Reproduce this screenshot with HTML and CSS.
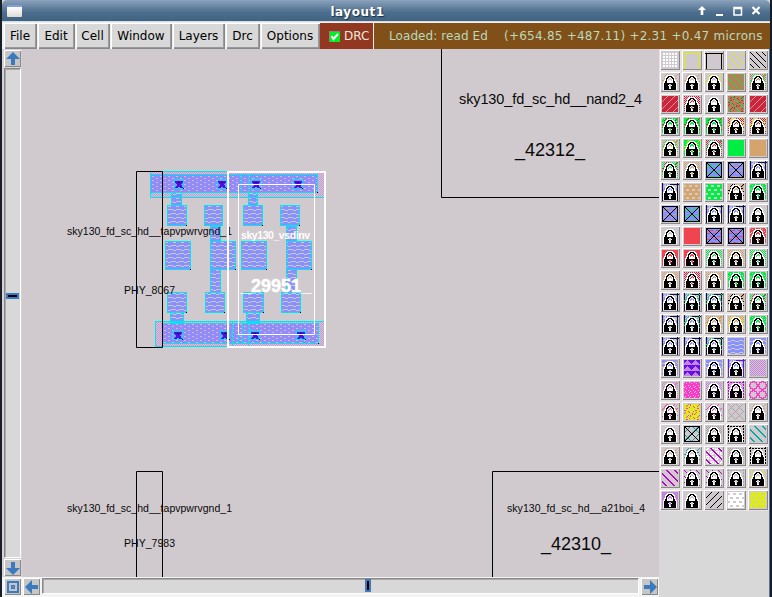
FILE: index.html
```html
<!DOCTYPE html>
<html lang="en">
<head>
<meta charset="utf-8">
<title>layout1</title>
<link rel="stylesheet" href="styles.css">
</head>
<body>
<div class="window">
  <header class="titlebar">
    <span class="window-icon"></span>
    <span class="title">layout1</span>
    <svg class="controls" width="66" height="14" viewBox="0 0 66 14">
      <path d="M6 2l4 4H7.3v5H4.7V6H2z" fill="#fff"/>
      <path d="M20 10h7v2h-7z" fill="#fff"/>
      <path d="M38 3.500h7.500v7.500H38zM38 4.500h7" fill="none" stroke="#fff" stroke-width="1.500"/>
      <path d="M56.500 3l7 7M63.500 3l-7 7" stroke="#fff" stroke-width="2.200"/>
    </svg>
  </header>
  <nav class="menubar">
    <button class="menu file">File</button>
    <button class="menu edit">Edit</button>
    <button class="menu cell">Cell</button>
    <button class="menu win">Window</button>
    <button class="menu layers">Layers</button>
    <button class="menu drcmenu">Drc</button>
    <button class="menu options">Options</button>
    <span class="drc"><svg width="11" height="11" viewBox="0 0 11 11"><path d="M0 0h11v11H0z" fill="#00f028"/><path d="M.5 11V.5H11" fill="none" stroke="#8a8580"/><path d="M2.500 5l2 3L9 3" fill="none" stroke="#fff" stroke-width="2"/></svg>DRC</span>
    <span class="status"><span class="loaded">Loaded: read Ed</span><span class="coords">(+654.85 +487.11) +2.31 +0.47 microns</span></span>
  </nav>
  <main class="workspace">
    <div class="vscroll">
      <span class="arrow"><svg width="14" height="14" viewBox="0 0 14 14"><path d="M7 0l7 7H9v6H5V7H0z"/></svg></span>
      <span class="vtrack"><i class="vthumb"></i></span>
      <span class="arrow"><svg width="14" height="14" viewBox="0 0 14 14"><path d="M7 14l7-7H9V1H5v6H0z"/></svg></span>
    </div>
    <svg class="layout" width="637" height="528" viewBox="22 49 637 528">
      <defs>
        <pattern id="metal" width="8" height="8" patternUnits="userSpaceOnUse">
          <path d="M0 0h8v8H0z" fill="#8790ff"/>
          <path d="M0 1h5v1H0zM5 2h3v1H5zM3 5h5v1H3zM0 6h3v1H0z" fill="#cfc8d4"/>
        </pattern>
        <pattern id="rail" width="8" height="4" patternUnits="userSpaceOnUse">
          <path d="M0 0h8v4H0z" fill="#8d8cfb"/>
          <path d="M0 0h2v1H0zM4 2h2v1H4z" fill="#d4bccf"/>
          <path d="M5 0h1v1H5zM1 2h1v1H1zM3 1h1v1H3zM7 3h1v1H7z" fill="#b584ea"/>
        </pattern>
        <pattern id="well" width="2" height="2" patternUnits="userSpaceOnUse">
          <path d="M0 0h2v2H0z" fill="#d0cace"/>
          <path d="M0 0h1v1H0zM1 1h1v1H1z" fill="#c994da"/>
        </pattern>
        <g id="via">
          <path d="M.5.5h9v9h-9z" fill="#9588f8" stroke="#00e5f0"/>
          <path d="M1 2h8v2H8v1H7v1h1v2h1v1H6V8H4v1H1V8h1V7h1V5H2V4H1z" fill="#4a10e8"/>
          <path d="M4 3h2v1H4zM9 9h1v1H9z" fill="#151020"/>
        </g>
      </defs>
      <g class="frames">
        <path d="M441.500 49v148.500H659M659 471.500H492.500V577M136.500 577V471.500h26V577"/>
      </g>
      <g shape-rendering="crispEdges">
        <path d="M150 172h174v25H150zM155 321h169v26H155z" fill="url(#well)"/>
        <path d="M150 174h168v18H150zM162 324h157v19H162z" fill="url(#rail)"/>
        <g class="metal">
          <path d="M171.500 192.500h10v13h-10zM248.500 192.500h9v13h-9zM210.500 226.500h10v15h-10zM286.500 226.500h10v15h-10zM210.500 269.500h10v23h-10zM286.500 269.500h10v23h-10zM170.500 312.500h13v10h-13zM246.500 312.500h13v10h-13z"/>
          <path d="M167.500 205.500h19v20h-19zM204.500 205.500h18v20h-18zM243.500 205.500h19v20h-19zM280.500 205.500h19v20h-19zM165.500 241.500h25v28h-25zM210.500 241.500h25v28h-25zM241.500 241.500h25v28h-25zM286.500 241.500h25v28h-25zM167.500 292.500h19v20h-19zM205.500 292.500h19v20h-19zM243.500 292.500h20v20h-20zM281.500 292.500h19v20h-19z"/>
        </g>
        <path class="edges" d="M228 171.500h-77.500v25.500H228M150 174.500h167.500v18H150M228 197h96M241.500 174v18M248.500 174v23M228 346.500h-72.500v-25H324M162 323.500h156.500v19.500H162M232.500 322v25M238.500 322v21M242.500 322v21M248.500 322v24"/>
        <use href="#via" x="174" y="179"/><use href="#via" x="217" y="179"/><use href="#via" x="251" y="179"/><use href="#via" x="293" y="179"/>
        <use href="#via" x="173" y="330"/><use href="#via" x="220" y="330"/><use href="#via" x="250" y="330"/><use href="#via" x="296" y="330"/>
        <path d="M186 225h1v1h-1zM190 269h1v1h-1zM235 269h1v1h-1zM262 225h1v1h-1zM299 225h1v1h-1zM266 269h1v1h-1zM311 269h1v1h-1zM186 312h1v1h-1zM224 312h1v1h-1zM263 312h1v1h-1zM300 312h1v1h-1zM317 192h1v1h-1zM318 343h1v1h-1z" fill="#000"/>
      </g>
      <path class="frames" d="M136.500 171.500h26v176h-26z"/>
      <g class="labels">
        <text x="67" y="235" textLength="165">sky130_fd_sc_hd__tapvpwrvgnd_1</text>
        <text x="124" y="294" textLength="51">PHY_8067</text>
        <text x="67" y="512" textLength="165">sky130_fd_sc_hd__tapvpwrvgnd_1</text>
        <text x="124" y="547" textLength="51">PHY_7983</text>
        <text x="507" y="512" textLength="138">sky130_fd_sc_hd__a21boi_4</text>
        <text class="mid" x="459" y="104" textLength="183">sky130_fd_sc_hd__nand2_4</text>
        <text class="big" x="515" y="156" textLength="70">_42312_</text>
        <text class="big" x="541" y="550" textLength="70">_42310_</text>
      </g>
      <path d="M228 172h97v175h-97z" fill="none" stroke="#fff" stroke-width="2"/>
      <path d="M238.500 184.500h76v150h-76z" fill="none" stroke="#fff"/>
      <g class="labels selected">
        <text x="241" y="239" textLength="69">sky130_vsdinv</text>
        <text class="big name" x="241" y="292" textLength="70">_29951_</text>
      </g>
    </svg>
    <aside class="palette" id="palette"></aside>
    <div class="hscroll">
      <span class="arrow"><svg width="14" height="14" viewBox="0 0 14 14"><path fill-rule="evenodd" d="M1 1h12v12H1zM3 3v8h8V3zM5 5h4v4H5zM6.500 6.500v1h1v-1z"/></svg></span>
      <span class="arrow"><svg width="14" height="14" viewBox="0 0 14 14"><path d="M0 7l7-7v5h6v4H7v5z"/></svg></span>
      <span class="htrack"><i class="hthumb"></i></span>
      <span class="arrow"><svg width="14" height="14" viewBox="0 0 14 14"><path d="M14 7L7 0v5H1v4h6v5z"/></svg></span>
    </div>
  </main>
</div>
<script src="palette.js"></script>
</body>
</html>
```

FILE: styles.css
```css
* { box-sizing: border-box; }
body { margin: 0; background: #111820; overflow: hidden; }
.window {
  width: 772px; height: 597px; display: flex; flex-direction: column;
  border-left: 2px solid #172029; border-right: 2px solid #141c26;
  background: #d8d8d8; font-family: "DejaVu Sans", sans-serif;
}
.titlebar {
  height: 22px; flex: none; display: grid; grid-template-columns: 80px 1fr 137px; align-items: center;
  background: linear-gradient(#8ba3bb, #7590ac 20%, #4c6d8d 60%, #426582 95%);
  border-bottom: 1px solid #d5dbe2; border-radius: 5px 5px 0 0;
}
.window-icon { width: 15px; height: 12px; margin-left: 5px; background: linear-gradient(#fff, #dedbd4); border-top: 2px solid #7f9fe0; border-radius: 1px; }
.title { color: #fff; font-size: 12px; font-weight: bold; text-align: center; letter-spacing: .5px; padding-top: 2px; text-shadow: 1px 1px 1px #1c3044; }
.controls { justify-self: end; margin-right: 8px; }
.menubar { height: 27px; flex: none; display: flex; padding: 1px 0 0 2px; gap: 1px; background: #efefef; }
.menu {
  height: 26px; margin: 0; padding: 0 1px 0 0; border: 0; background: #d8d8d8; color: #000;
  font: 12px/24px "DejaVu Sans", sans-serif; white-space: nowrap;
  box-shadow: inset 1px 1px #fff, inset -1px -1px #888, inset -2px -2px #999;
}
.file { width: 33px; }
.edit { width: 37px; }
.cell { width: 34px; }
.win { width: 61px; }
.layers { width: 52px; }
.drcmenu { width: 34px; }
.options { width: 59px; }
.drc { width: 53px; display: flex; align-items: center; gap: 4px; padding-left: 9px; background: #923820; color: #eee8de; font-size: 12px; margin-left: -1px; }
.status { flex: 1; display: flex; align-items: center; background: #805018; color: #b9d8be; font-size: 12px; white-space: pre; }
.loaded { width: 115px; margin-left: 15px; letter-spacing: .08px; }
.coords { letter-spacing: .24px; }
.workspace { flex: 1; min-height: 0; display: grid; grid-template-columns: 20px 637px 1fr; grid-template-rows: 528px 20px; }
.vscroll { grid-area: 1 / 1; padding: 1px 0 1px 2px; display: flex; flex-direction: column; gap: 1px; background: #d8d1d6; }
.arrow { flex: none; width: 17px; height: 17px; display: flex; align-items: center; justify-content: center; background: #c6c6c6; box-shadow: inset 1px 1px #fff, inset -1px -1px #888; }
.arrow svg { fill: #3b7abf; }
.vtrack { flex: 1; width: 17px; padding-top: 224px; background: #d8d8d8; border: 1px solid; border-color: #888 #fff #fff #888; box-shadow: inset 1px 1px #aaa; }
.vthumb { display: block; height: 6px; margin: 0 1px; border: 2px solid #3b7abf; background: #000; }
.layout { grid-area: 1 / 2; display: block; background: #d0cace; }
.frames, .frames path { fill: none; stroke: #000; stroke-width: 1; }
.metal path { fill: url(#metal); stroke: #00e5f0; }
.edges { fill: none; stroke: #00e5f0; }
.labels { font: 10.5px "Liberation Sans", sans-serif; fill: #080808; }
.labels .mid { font-size: 14.5px; }
.labels .big { font-size: 18px; }
.labels.selected { fill: #fff; font-weight: bold; }
.labels .name { stroke: #fff; stroke-width: .4px; }
.palette { grid-area: 1 / 3 / 3 / 4; display: grid; grid-template-columns: repeat(5, 20px); grid-auto-rows: 20px; gap: 2px; padding: 1px 0 0 1px; align-content: start; background: #d8d8d8; border-right: 1px solid #56789b; }
.swatch { width: 20px; height: 20px; padding: 1px; background: #d0cace; box-shadow: inset 1px 1px #fff, inset -1px -1px #888, 0 0 0 1px #e6e2e4; }
.swatch svg { display: block; }
.hscroll { grid-area: 2 / 1 / 3 / 3; display: flex; gap: 2px; padding: 1px 1px 2px 2px; background: #f4f4f4; }
.htrack { flex: 1; display: flex; padding-left: 322px; height: 16px; background: #d8d8d8; border: 1px solid; border-color: #888 #fff #fff #888; box-shadow: inset 1px 1px #aaa; }
.hthumb { width: 6px; height: 13px; border: 2px solid #3b7abf; background: #000; }
```

FILE: palette.js
```javascript
// Pixel tests for each stipple on an 18 x 18 swatch.
const inside = (x, y) => x > 0 && x < 17 && y > 0 && y < 17;
const stipples = {
  solid: inside,
  check: (x, y) => inside(x, y) && (x + y) % 2 === 0,
  dots: (x, y) => x % 3 !== 1 && y % 3 !== 1 && x > 1 && y > 1 && x < 17 && y < 17,
  holes: (x, y) => inside(x, y) && !(y % 4 > 1 && (x + (y % 8 > 3 ? 3 : 0)) % 6 < 3),
  frame: (x, y) => y > 1 && (y === 2 || x === 1 || x === 16),
  top: (x, y) => y > 1 && (y < 3 || x === 1 || x === 16),
  falling: (x, y) => inside(x, y) && (x - y + 36) % 6 === 0,
  fallingThin: (x, y) => inside(x, y) && (x - y + 36) % 8 === 0,
  fallingWide: (x, y) => inside(x, y) && (x - y + 36) % 8 < 2,
  rising: (x, y) => inside(x, y) && (x + y) % 7 === 0,
  cross: (x, y) => inside(x, y) && (x === y || x + y === 17 || x === 1 || y === 1 || x === 16 || y === 16),
  lattice: (x, y) => inside(x, y) && ((x + y) % 8 === 0 || (x - y + 40) % 8 === 0),
  rings: (x, y) => { const d = Math.hypot(x % 9 - 4, y % 9 - 4); return d > 3 && d < 4.4; },
  waves: (x, y) => inside(x, y) && (y + (x % 8 > 3 ? 1 : 0)) % 4 !== 0,
  dashes: (x, y) => inside(x, y) && y % 3 === 0 && (x + y) % 7 < 4,
  triangles: (x, y) => inside(x, y) && (y % 6 < 1 || Math.abs(x % 8 - 4) > y % 6 - 1),
  flecks: (x, y) => inside(x, y) && (x * 7 + y * 11 + x * y) % 5 < 3,
  dense: (x, y) => inside(x, y) && (x * 7 + y * 11 + x * y) % 5 < 4,
  sparse: (x, y) => inside(x, y) && (x * 5 + y * 3 + x * y) % 11 < 2,
  edge: (x, y) => (x === 1 || x === 16 || y === 1) && (x + y) % 3 !== 0,
  bars: (x, y) => x === 1 || x === 16 || (y === 1 && x > 8)
};
const ink = {
  w: '#ffffff', y: '#dff000', k: '#000000', n: '#b58059', g: '#00ee44', r: '#cc2244',
  t: '#d5a46c', b: '#8790ff', d: '#10103c', R: '#f04450', u: '#6010e8', v: '#c783dd',
  p: '#ff38cc', c: '#00a8a8', m: '#b800c8', s: '#a8a4a6', o: '#d09020'
};
// "L" marks a locked layer; the rest lists ink:stipple from bottom to top.
const rows = [
  'w:dots|y:top|k:frame|y:fallingThin|k:falling',
  'L t:sparse|L t:sparse|L y:sparse|n:solid g:fallingThin|L n:check g:sparse',
  'r:solid t:rising|L r:check|L|n:solid r:sparse g:fallingThin|r:solid t:rising',
  'L g:dense r:sparse|L g:solid r:sparse|L g:solid r:sparse|L r:check y:sparse|L r:check y:sparse',
  'L t:check g:sparse|L g:solid y:sparse|L r:check g:sparse|g:solid|t:solid',
  'L g:check r:sparse|L t:check|b:solid g:dashes k:cross|b:solid t:dashes k:cross|L b:flecks d:bars',
  'L b:flecks d:bars|t:holes|g:holes|L t:check k:sparse|L g:dense',
  'b:solid t:dashes k:cross|b:solid g:dashes k:cross|L b:flecks d:bars|L b:flecks d:bars|L',
  'L|R:solid|b:solid R:dashes k:cross|b:solid R:dashes k:cross|L R:dense',
  'L R:solid|L R:solid|L g:check|L t:check|L g:check',
  'L t:check|L r:check|L t:check|L g:dense|L g:dense',
  'L b:flecks d:bars|L b:flecks d:bars g:sparse|L b:flecks d:bars g:sparse|L t:check k:sparse|L g:check r:sparse',
  'L b:flecks d:bars|L b:flecks d:bars g:sparse|L t:check o:sparse|L t:check y:sparse|L g:dense',
  'L b:flecks d:bars|L b:flecks d:bars|L b:flecks d:bars g:sparse|b:waves|L b:waves',
  'L b:waves t:sparse|v:solid u:triangles|L b:waves|L b:flecks u:bars|v:check',
  'L v:check t:sparse|p:dense|L v:check|L v:check m:edge|p:rings',
  'L t:sparse p:rising|y:dense p:sparse|L p:rising|s:lattice|L t:sparse',
  'L|c:lattice k:cross|L s:check|L k:edge|c:fallingWide',
  'L c:sparse t:sparse|L c:sparse|w:flecks m:fallingWide|L s:check|L k:edge',
  'm:fallingWide|L m:falling|L m:falling|L s:edge|L y:falling',
  'L v:solid|L|k:rising|w:holes|y:holes'
];
const lock = [
  '....wwwwww....',
  '...wwkkkkww...',
  '..wwkkwwkkww..',
  '..wkkw..wkkw..',
  '..wkw....wkw..',
  '.wwkw.ww.wkww.',
  '.wkkwwwwwwkkw.',
  'wwkkwwwwwwkkww',
  'wkkkkkkkkkkkkw',
  'wkkkkk..kkkkkw',
  'wkkkkw..wkkkkw',
  'wkkkkkw.kkkkkw',
  'wkkkkkw.kkkkkw',
  'wkkkkkwwkkkkkw',
  'wkkkkkkkkkkkkw'
];
function pixels(color, test) {
  let d = '';
  for (let y = 0; y < 18; y++)
    for (let x = 0; x < 18; x++)
      if (test(x, y)) d += `M${x} ${y}h1v1h-1z`;
  return `<path fill="${color}" d="${d}"/>`;
}
document.getElementById('palette').innerHTML = rows.flatMap(row => row.split('|')).map(spec => {
  let art = '';
  let locked = false;
  for (const part of spec.split(' ')) {
    if (part === 'L') { locked = true; continue; }
    const [color, name] = part.split(':');
    art += pixels(ink[color], stipples[name]);
  }
  if (locked) for (const color of ['w', 'k'])
    art += pixels(ink[color], (x, y) => (lock[y - 2] || '')[x - 2] === color);
  return `<div class="swatch"><svg width="18" height="18" viewBox="0 0 18 18" shape-rendering="crispEdges">${art}</svg></div>`;
}).join('');
```
